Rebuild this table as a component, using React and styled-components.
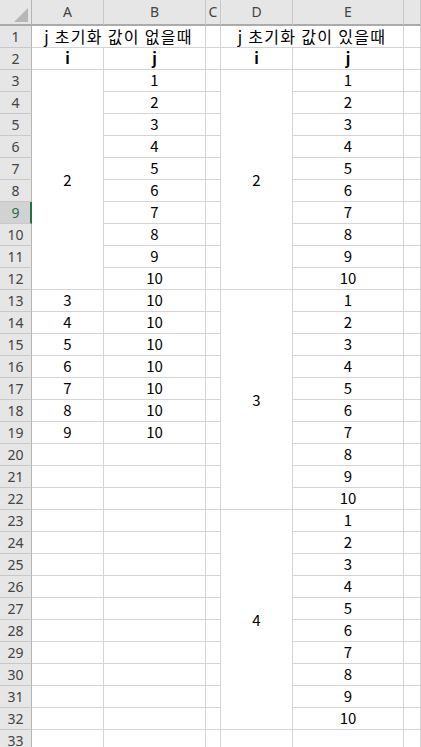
import React from "react";
import styled, { createGlobalStyle } from "styled-components";

const GlobalStyle = createGlobalStyle`
  html, body {
    margin: 0;
    padding: 0;
    background: #ffffff;
    overflow: hidden;
  }
`;

const Sheet = styled.div`
  display: grid;
  grid-template-columns: 32px 72px 102px 15px 72px 111px 1fr;
  grid-template-rows: 26px repeat(33, 22px);
  width: 421px;
  height: 747px;
  overflow: hidden;
  font-family: "Noto Sans CJK KR", "Noto Sans", sans-serif;
`;

const Corner = styled.div`
  box-sizing: border-box;
  background: #e6e6e6;
  border-right: 1px solid #b5b5b5;
  border-bottom: 2px solid #ababab;
  display: flex;
  align-items: flex-end;
  justify-content: flex-end;
  padding: 0 3px 2px 0;
`;

const ColHeader = styled.div`
  box-sizing: border-box;
  background: #e6e6e6;
  border-right: 1px solid #c9c9c9;
  border-bottom: 2px solid #ababab;
  color: #444444;
  font-family: "Noto Sans", sans-serif;
  font-size: 14px;
  display: flex;
  align-items: center;
  justify-content: center;
  padding-bottom: 1px;
`;

const RowHeader = styled.div`
  box-sizing: border-box;
  background: ${p => (p.$active ? "#d2d2d2" : "#e6e6e6")};
  border-right: ${p => (p.$active ? "2px solid #217346" : "1px solid #b5b5b5")};
  border-bottom: 1px solid #c9c9c9;
  color: ${p => (p.$active ? "#217346" : "#444444")};
  font-family: "Noto Sans", sans-serif;
  font-size: 14px;
  line-height: 18px;
  display: flex;
  align-items: center;
  justify-content: center;
  padding-left: ${p => (p.$active ? "1px" : "0")};
`;

const Cell = styled.div`
  box-sizing: border-box;
  grid-row: span ${p => p.$rows || 1};
  grid-column: span ${p => p.$cols || 1};
  border-right: 1px solid #d4d4d4;
  border-bottom: 1px solid #d4d4d4;
  background: #ffffff;
  color: #000000;
  font-size: ${p => (p.$title ? "16px" : "15px")};
  letter-spacing: ${p => (p.$title ? "1.3px" : "0")};
  font-weight: ${p => (p.$bold ? 700 : 400)};
  line-height: 20px;
  white-space: nowrap;
  display: flex;
  justify-content: center;
  align-items: ${p => (p.$rows > 1 ? "center" : "flex-end")};
  padding-bottom: ${p => (p.$rows > 1 ? "0" : "1px")};
`;

const columns = ["A", "B", "C", "D", "E", ""];

function buildRows() {
  const rows = [];
  rows.push([
    { text: "j 초기화 값이 없을때", cols: 2, title: true },
    { text: "" },
    { text: "j 초기화 값이 있을때", cols: 2, title: true },
    { text: "" },
  ]);
  rows.push([
    { text: "i", bold: true },
    { text: "j", bold: true },
    { text: "" },
    { text: "i", bold: true },
    { text: "j", bold: true },
    { text: "" },
  ]);
  for (let r = 3; r <= 33; r++) {
    const cells = [];
    const k = ((r - 3) % 10) + 1;
    // column A
    if (r === 3) cells.push({ text: "2", rows: 10 });
    else if (r >= 13 && r <= 19) cells.push({ text: String(r - 10) });
    else if (r > 19) cells.push({ text: "" });
    // column B
    if (r <= 12) cells.push({ text: String(r - 2) });
    else if (r <= 19) cells.push({ text: "10" });
    else cells.push({ text: "" });
    // column C
    cells.push({ text: "" });
    // column D
    if (r === 3) cells.push({ text: "2", rows: 10 });
    else if (r === 13) cells.push({ text: "3", rows: 10 });
    else if (r === 23) cells.push({ text: "4", rows: 10 });
    else if (r === 33) cells.push({ text: "" });
    // column E
    cells.push({ text: r <= 32 ? String(k) : "" });
    // column F
    cells.push({ text: "" });
    rows.push(cells);
  }
  return rows;
}

function SelectAll() {
  return (
    <svg width="14" height="14" viewBox="0 0 14 14">
      <polygon points="14,0 14,14 0,14" fill="#b7b7b7" />
    </svg>
  );
}

export default function App() {
  const rows = buildRows();
  return (
    <>
      <GlobalStyle />
      <Sheet>
        <Corner>
          <SelectAll />
        </Corner>
        {columns.map((c, i) => (
          <ColHeader key={"h" + i}>{c}</ColHeader>
        ))}
        {rows.map((cells, ri) => (
          <React.Fragment key={"r" + ri}>
            <RowHeader $active={ri + 1 === 9}>{ri + 1}</RowHeader>
            {cells.map((cell, ci) => (
              <Cell
                key={ci}
                $rows={cell.rows}
                $cols={cell.cols}
                $bold={cell.bold}
                $title={cell.title}
              >
                {cell.text}
              </Cell>
            ))}
          </React.Fragment>
        ))}
      </Sheet>
    </>
  );
}
